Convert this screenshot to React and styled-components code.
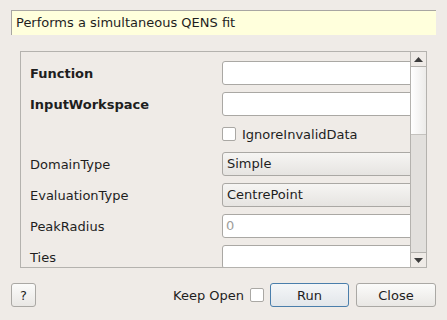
import React from 'react';
import styled, { createGlobalStyle, css } from 'styled-components';

const GlobalStyle = createGlobalStyle`
  html, body {
    margin: 0;
    padding: 0;
    background: #efebe7;
  }
  body {
    font-family: "DejaVu Sans", "Liberation Sans", sans-serif;
    font-size: 13px;
    color: #1e1e1e;
  }
`;

const Dialog = styled.div`
  width: 447px;
  height: 320px;
  box-sizing: border-box;
  padding: 10px 11px 0 11px;
  display: flex;
  flex-direction: column;
  background: #efebe7;
  overflow: hidden;
`;

const Description = styled.div`
  height: 25px;
  box-sizing: border-box;
  background: #ffffdc;
  border-left: 1px solid #a8a6a2;
  border-top: 1px solid #a8a6a2;
  padding-left: 4px;
  line-height: 23px;
  white-space: nowrap;
`;

const ScrollArea = styled.div`
  margin: 16px 9px 0 9px;
  height: 217px;
  box-sizing: border-box;
  border: 1px solid #b4b2ae;
  display: flex;
`;

const Viewport = styled.div`
  flex: 1;
  overflow: hidden;
  padding: 9px 0 0 9px;
`;

const Form = styled.div`
  display: grid;
  grid-template-columns: 192px 200px;
  row-gap: 7px;
  align-items: center;
`;

const Label = styled.div`
  font-weight: ${({ bold }) => (bold ? 'bold' : 'normal')};
  white-space: nowrap;
`;

const fieldBase = css`
  height: 24px;
  box-sizing: border-box;
  border: 1px solid #aaa8a4;
  border-radius: 3px;
  padding-left: 4px;
  line-height: 22px;
  white-space: nowrap;
`;

const TextField = styled.div`
  ${fieldBase}
  background: #ffffff;
  color: ${({ placeholder }) => (placeholder ? '#a09e9a' : '#1e1e1e')};
  padding-left: 3px;
`;

const Combo = styled.div`
  ${fieldBase}
  background: linear-gradient(#f6f5f3, #e6e4e1);
`;

const CheckRow = styled.div`
  grid-column: 2;
  display: flex;
  align-items: center;
  gap: 6px;
  height: 22px;
`;

const CheckBox = styled.span`
  width: 14px;
  height: 14px;
  box-sizing: border-box;
  border: 1px solid #aaa8a4;
  border-radius: 2px;
  background: #ffffff;
  flex: none;
`;

const ScrollBar = styled.div`
  width: 15px;
  flex: none;
  border-left: 1px solid #b4b2ae;
  display: flex;
  flex-direction: column;
  background: #e2e0dd;
`;

const ArrowButton = styled.div`
  height: 14px;
  flex: none;
  display: flex;
  align-items: center;
  justify-content: center;
  background: #efebe7;
  border-top: ${({ bottom }) => (bottom ? '1px solid #b4b2ae' : 'none')};
  border-bottom: ${({ bottom }) => (bottom ? 'none' : '1px solid #b4b2ae')};
`;

const Handle = styled.div`
  height: 67px;
  flex: none;
  background: linear-gradient(to right, #ffffff, #ecebe9);
  border-bottom: 1px solid #c4c2be;
`;

const Trough = styled.div`
  flex: 1;
`;

const Footer = styled.div`
  margin-top: 15px;
  height: 24px;
  display: flex;
  align-items: center;
`;

const Spacer = styled.div`
  flex: 1;
`;

const Button = styled.button`
  height: 24px;
  width: ${({ w }) => w}px;
  box-sizing: border-box;
  margin-left: ${({ gap }) => gap || 0}px;
  font: inherit;
  color: #1e1e1e;
  border-radius: 3px;
  border: 1px solid ${({ primary }) => (primary ? '#4a7eab' : '#aaa8a4')};
  background: ${({ primary }) =>
    primary ? 'linear-gradient(#f4f6f8, #e2e6ea)' : 'linear-gradient(#fbfbfa, #e9e7e4)'};
  padding: 0;
`;

const KeepOpen = styled.label`
  display: flex;
  align-items: center;
  gap: 6px;
  margin-right: 6px;
`;

const Arrow = ({ down }) => (
  <svg width="9" height="5" viewBox="0 0 9 5">
    <polygon points={down ? '0,0 9,0 4.5,5' : '0,5 9,5 4.5,0'} fill="#3c3c3c" />
  </svg>
);

const rows = [
  { label: 'Function', bold: true, kind: 'text' },
  { label: 'InputWorkspace', bold: true, kind: 'text' },
  { kind: 'check', label: 'IgnoreInvalidData' },
  { label: 'DomainType', kind: 'combo', value: 'Simple' },
  { label: 'EvaluationType', kind: 'combo', value: 'CentrePoint' },
  { label: 'PeakRadius', kind: 'text', value: '0', placeholder: true },
  { label: 'Ties', kind: 'text' },
];

export default function App() {
  return (
    <>
      <GlobalStyle />
      <Dialog>
        <Description>Performs a simultaneous QENS fit</Description>
        <ScrollArea>
          <Viewport>
            <Form>
              {rows.map((r, i) =>
                r.kind === 'check' ? (
                  <CheckRow key={i}>
                    <CheckBox />
                    {r.label}
                  </CheckRow>
                ) : (
                  <React.Fragment key={i}>
                    <Label bold={r.bold}>{r.label}</Label>
                    {r.kind === 'combo' ? (
                      <Combo>{r.value}</Combo>
                    ) : (
                      <TextField placeholder={r.placeholder}>{r.value}</TextField>
                    )}
                  </React.Fragment>
                )
              )}
            </Form>
          </Viewport>
          <ScrollBar>
            <ArrowButton>
              <Arrow />
            </ArrowButton>
            <Handle />
            <Trough />
            <ArrowButton bottom>
              <Arrow down />
            </ArrowButton>
          </ScrollBar>
        </ScrollArea>
        <Footer>
          <Button w={25}>?</Button>
          <Spacer />
          <KeepOpen>
            Keep Open
            <CheckBox />
          </KeepOpen>
          <Button w={79} primary>Run</Button>
          <Button w={80} gap={7}>Close</Button>
        </Footer>
      </Dialog>
    </>
  );
}
